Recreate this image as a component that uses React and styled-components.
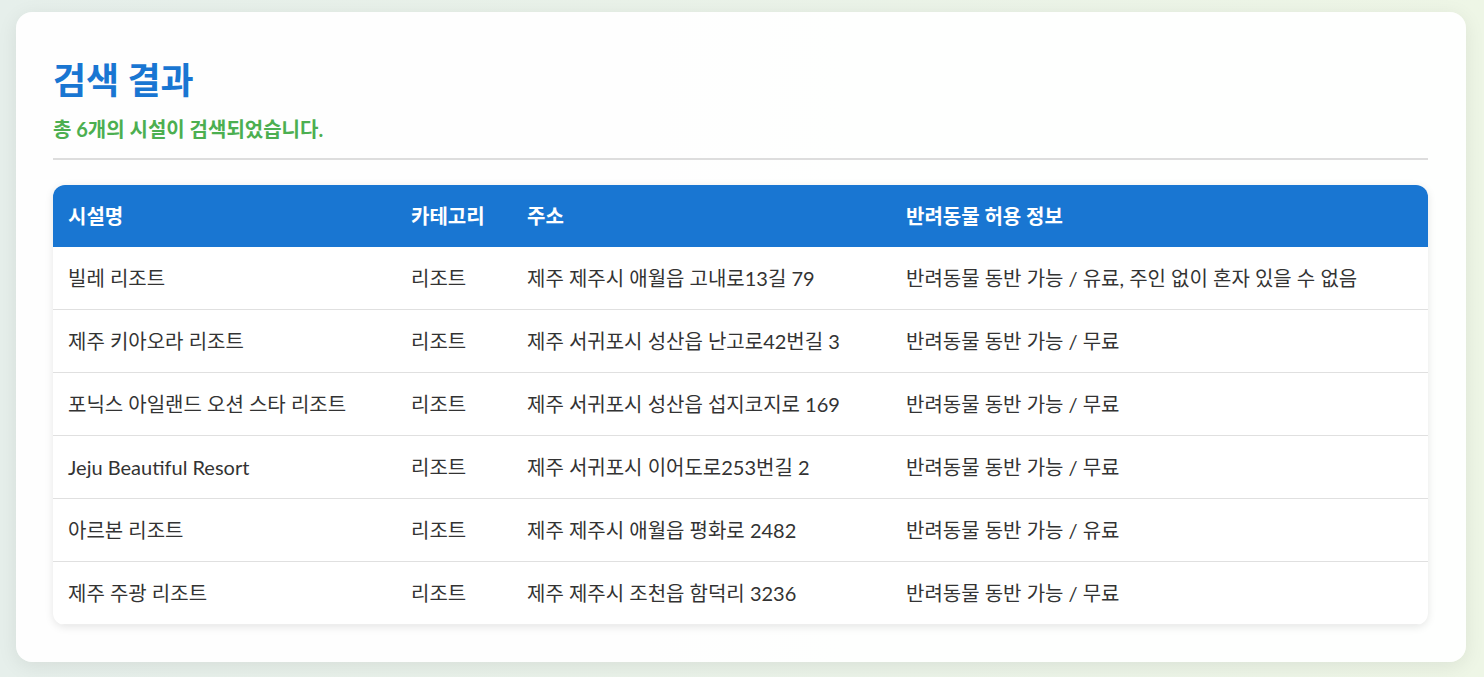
import React from "react";
import styled, { createGlobalStyle } from "styled-components";

const GlobalStyle = createGlobalStyle`
  html, body { margin: 0; padding: 0; }
  body {
    font-family: "Lato", "Noto Sans CJK KR", sans-serif;
    background: linear-gradient(to right, #e6efeb, #eef6e6);
    min-height: 677px;
    color: #333;
  }
  * { box-sizing: border-box; }
`;

const Page = styled.div`
  padding: 12px 18px 15px 16px;
`;

const Card = styled.section`
  background: rgba(255, 255, 255, 0.93);
  border-radius: 16px;
  box-shadow: 0 4px 20px rgba(0, 0, 0, 0.08);
  padding: 37px 38px 37px 37px;
`;

const Header = styled.header`
  border-bottom: 2px solid #dddddd;
  padding-bottom: 16px;
  margin-bottom: 25px;
`;

const Title = styled.h1`
  margin: 10px 0 20px;
  font-family: "Noto Sans CJK KR", sans-serif;
  font-size: 36px;
  line-height: 38px;
  font-weight: 700;
  color: #1976d2;
`;

const Summary = styled.p`
  margin: 0;
  font-size: 20px;
  line-height: 25px;
  font-weight: 700;
  color: #4caf50;
`;

const Table = styled.table`
  width: 100%;
  border-collapse: separate;
  border-spacing: 0;
  table-layout: fixed;
  border-radius: 12px;
  overflow: hidden;
  box-shadow: 0 2px 8px rgba(0, 0, 0, 0.1);
  background: #fff;
`;

const HeadCell = styled.th`
  background: #1976d2;
  color: #fff;
  text-align: left;
  font-weight: 700;
  font-size: 20px;
  line-height: 26px;
  padding: 18px 15px;
`;

const Row = styled.tr`
  & td { border-bottom: 1px solid #e0e0e0; }
  &:last-child td { border-bottom-color: #eeeeee; }
`;

const Cell = styled.td`
  font-size: 20px;
  line-height: 26px;
  padding: 18px 15px;
  color: #333;
  white-space: nowrap;
`;

const rows = [
  ["빌레 리조트", "리조트", "제주 제주시 애월읍 고내로13길 79", "반려동물 동반 가능 / 유료, 주인 없이 혼자 있을 수 없음"],
  ["제주 키아오라 리조트", "리조트", "제주 서귀포시 성산읍 난고로42번길 3", "반려동물 동반 가능 / 무료"],
  ["포닉스 아일랜드 오션 스타 리조트", "리조트", "제주 서귀포시 성산읍 섭지코지로 169", "반려동물 동반 가능 / 무료"],
  ["Jeju Beautiful Resort", "리조트", "제주 서귀포시 이어도로253번길 2", "반려동물 동반 가능 / 무료"],
  ["아르본 리조트", "리조트", "제주 제주시 애월읍 평화로 2482", "반려동물 동반 가능 / 유료"],
  ["제주 주광 리조트", "리조트", "제주 제주시 조천읍 함덕리 3236", "반려동물 동반 가능 / 무료"],
];

export default function App() {
  return (
    <>
      <GlobalStyle />
      <Page>
        <Card>
          <Header>
            <Title>검색 결과</Title>
            <Summary>총 6개의 시설이 검색되었습니다.</Summary>
          </Header>
          <Table>
            <colgroup>
              <col style={{ width: 343 }} />
              <col style={{ width: 116 }} />
              <col style={{ width: 379 }} />
              <col />
            </colgroup>
            <thead>
              <tr>
                <HeadCell>시설명</HeadCell>
                <HeadCell>카테고리</HeadCell>
                <HeadCell>주소</HeadCell>
                <HeadCell>반려동물 허용 정보</HeadCell>
              </tr>
            </thead>
            <tbody>
              {rows.map((r, i) => (
                <Row key={i}>
                  {r.map((c, j) => (
                    <Cell key={j}>{c}</Cell>
                  ))}
                </Row>
              ))}
            </tbody>
          </Table>
        </Card>
      </Page>
    </>
  );
}
